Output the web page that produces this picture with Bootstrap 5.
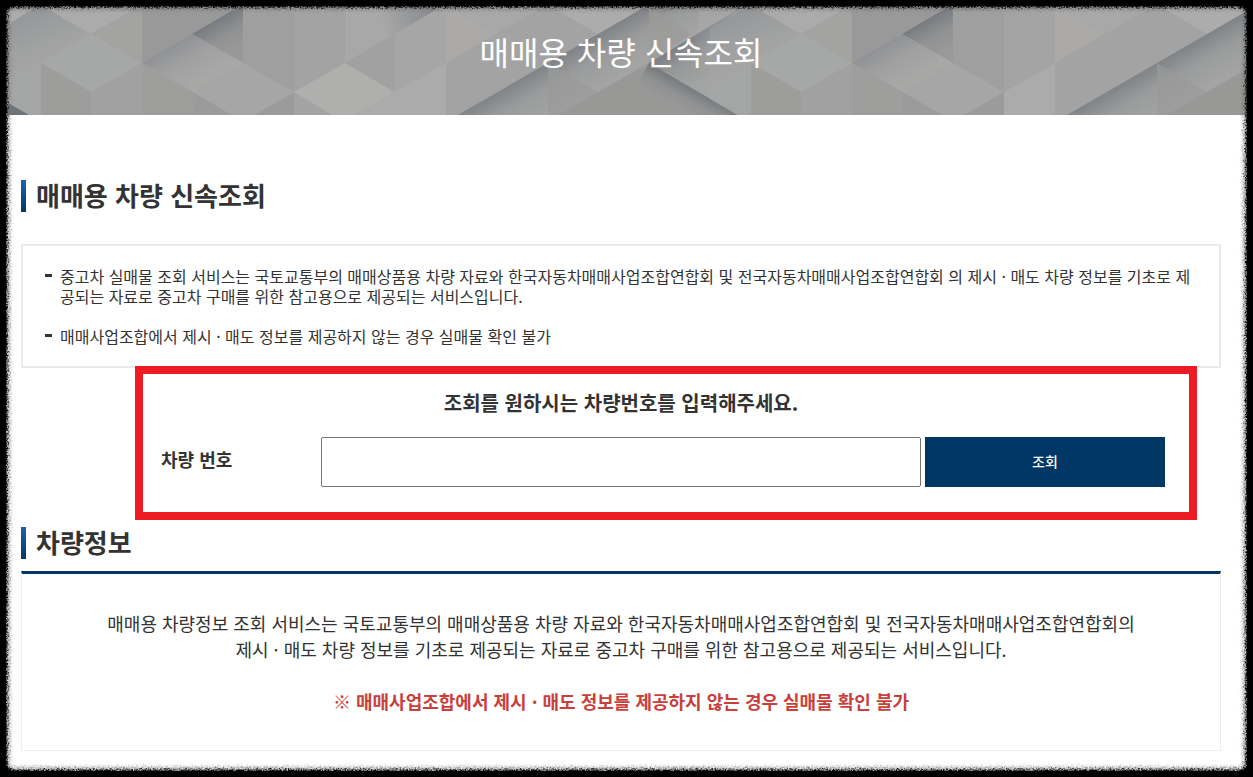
<!DOCTYPE html>
<html lang="ko">
<head>
<meta charset="utf-8">
<meta name="viewport" content="width=device-width, initial-scale=1">
<title>매매용 차량 신속조회</title>
<link href="https://cdn.jsdelivr.net/npm/bootstrap@5.3.0/dist/css/bootstrap.min.css" rel="stylesheet">
<style>
  :root { --navy: #003764; --ink: #333; }
  body { font-family: "Noto Sans CJK KR", sans-serif; color: var(--ink); background: #fff; }
  .page { min-height: 100vh; }
  .gutters { padding-left: 21px; padding-right: 32px; }
  .banner { height: 115px; background: #a3a3a3; }
  .banner h1 { font-size: 32px; line-height: 48px; padding-top: 27px; }
  .section-title { border-left: 5px solid; border-image: linear-gradient(#1a67ac, var(--navy)) 1; padding-left: 10px; font-size: 26px; line-height: 30px; padding-bottom: 2px; font-weight: 700; }
  .intro { padding-top: 65px; }
  .notice { border: 2px solid #eaeaea; padding: 20px 20px 20px 37px; margin-top: 32px; font-size: 16px; line-height: 20px; }
  .notice li + li { margin-top: 20px; }
  .notice li::before { content: ""; position: absolute; left: -15px; top: 8px; width: 7px; height: 3px; background: var(--ink); }
  .lookup { padding: 19px 56px 33px 140px; }
  .lookup h3 { font-size: 20px; line-height: 32px; margin: 0 -56px 18px -140px; }
  .lookup label { width: 160px; font-size: 18px; padding-bottom: 5px; }
  .lookup .form-control { height: 50px; border: 1px solid #767676; border-radius: 2px; }
  .lookup .btn { width: 240px; height: 50px; padding-bottom: 8px; background: var(--navy); color: #fff; font-size: 14px; }
  .marker { inset: -2px 24px 0 114px; border: 8px solid #ed1c24; }
  .details { padding-top: 7px; }
  .result { border: 1px solid #eee; border-top: 3px solid var(--navy); margin-top: 12px; padding: 36px 16px; font-size: 18px; line-height: 26px; }
  .caution { color: #c8403c; margin-top: 26px; }
</style>
</head>
<body>
<div class="page position-relative overflow-hidden">
  <header class="banner gutters position-relative overflow-hidden text-center text-white">
    <svg class="position-absolute top-0 start-0 w-100 h-100" viewBox="0 0 1253 115" preserveAspectRatio="xMidYMin slice" aria-hidden="true">
      <defs>
        <linearGradient id="fallA" gradientUnits="userSpaceOnUse" x1="207" y1="25" x2="226" y2="58"><stop offset="0" stop-color="#777b80"/><stop offset=".5" stop-color="#919293"/><stop offset="1" stop-color="#999"/></linearGradient>
        <linearGradient id="fallB" gradientUnits="userSpaceOnUse" x1="167" y1="47" x2="190" y2="87"><stop offset="0" stop-color="#8e9094"/><stop offset=".45" stop-color="#a0a0a1"/><stop offset="1" stop-color="#a8a8a7"/></linearGradient>
        <linearGradient id="fallC" gradientUnits="userSpaceOnUse" x1="345" y1="40" x2="430" y2="10"><stop offset=".45" stop-color="#a8a8a8"/><stop offset="1" stop-color="#8a8c90"/></linearGradient>
        <linearGradient id="fallD" gradientUnits="userSpaceOnUse" x1="560" y1="56" x2="583" y2="96"><stop offset="0" stop-color="#808387"/><stop offset=".45" stop-color="#9a9b9c"/><stop offset="1" stop-color="#a3a4a3"/></linearGradient>
        <linearGradient id="fallE" gradientUnits="userSpaceOnUse" x1="670" y1="51" x2="692" y2="89"><stop offset="0" stop-color="#7c8085"/><stop offset=".4" stop-color="#959798"/><stop offset="1" stop-color="#a3a5a4"/></linearGradient>
        <linearGradient id="liftE" gradientUnits="userSpaceOnUse" x1="680" y1="0" x2="745" y2="0"><stop offset="0" stop-color="#a5a5a5" stop-opacity="0"/><stop offset="1" stop-color="#a5a5a5" stop-opacity=".85"/></linearGradient>
        <linearGradient id="fallF" gradientUnits="userSpaceOnUse" x1="700" y1="92" x2="688" y2="114"><stop offset="0" stop-color="#77797e"/><stop offset=".5" stop-color="#909192"/><stop offset="1" stop-color="#989897"/></linearGradient>
        <linearGradient id="fallG" gradientUnits="userSpaceOnUse" x1="15" y1="15" x2="38" y2="70"><stop offset="0" stop-color="#949699"/><stop offset=".6" stop-color="#a0a1a1"/><stop offset="1" stop-color="#a4a5a4"/></linearGradient>
        <clipPath id="middle"><path d="M710 0H1004V115H710z"/></clipPath>
        <clipPath id="rightEnd"><path d="M1004 0H1253V115H1004z"/></clipPath>
        <g id="facets">
          <path fill="#a4a6a5" d="M0 50H41V115H28L0 99z"/>
          <path fill="url(#fallG)" d="M32 0L91 34L41 63L0 85V28L12 22L50 0z"/>
          <path fill="#ababab" d="M32 0L91 34L150 0z"/>
          <path fill="#a3a3a1" d="M91 34L142 5V63z"/>
          <path fill="#a6a8a7" d="M41 63L91 34L142 63L91 92z"/>
          <path fill="#9d9d9c" d="M41 63L91 92V115H41z"/>
          <path fill="#a0a1a0" d="M91 92L142 63V115H91z"/>
          <path fill="#999" d="M142 0H250L142 63z"/>
          <path fill="url(#fallA)" d="M192 34L250 0H243V63z"/>
          <path fill="#9f9fa0" d="M243 4L250 0H294V92L243 63z"/>
          <path fill="#a3a3a3" d="M294 0H345V63L294 92z"/>
          <path fill="url(#fallB)" d="M142 63L192 34L243 63L193 92z"/>
          <path fill="#9e9f9d" d="M142 63L193 92V115H142z"/>
          <path fill="#9b9b9b" d="M193 92L232 115H193zM294 92V115H254z"/>
          <path fill="#a6a6a6" d="M193 92L243 63L294 92L254 115H232z"/>
          <path fill="#afafad" d="M294 92L345 63L395 92L355 115H332z"/>
          <path fill="url(#fallC)" d="M345 0H453L345 63z"/>
          <path fill="#a1a1a1" d="M345 63L395 34V92z"/>
          <path fill="#a6a6a6" d="M395 34L446 4V63L395 92z"/>
          <path fill="#ababab" d="M395 92L446 63V115H355z"/>
          <path fill="#acaaa8" d="M446 5L497 34L446 63z"/>
          <path fill="#a8a8a8" d="M446 5V0H556L497 34z"/>
          <path fill="#a3a3a3" d="M446 63L554 0L598 34L458 115H446z"/>
          <path fill="#acacac" d="M540 0L598 34L657 0z"/>
          <path fill="url(#fallD)" d="M458 115L657 0H754L598 92L558 115z"/>
          <path fill="#999a98" fill-opacity=".7" d="M548 63L598 92L558 115H548z"/>
          <path fill="#9b9b99" fill-opacity=".7" d="M649 5L690 34L649 63z"/>
          <path fill="#989897" d="M598 92L649 63L738 115H558z"/>
          <path fill="url(#fallF)" d="M649 63L738 115H620z"/>
          <path fill="#a6a6a6" fill-opacity=".7" d="M699 0H754L699 34z"/>
          <path fill="url(#fallE)" d="M649 63L754 0L801 34L751 63V115H738z"/>
          <path fill="url(#liftE)" d="M680 45L754 0L801 34L751 63L699 70z"/>
        </g>
      </defs>
      <use href="#facets"/>
      <g clip-path="url(#middle)"><use href="#facets" x="710"/></g>
      <g clip-path="url(#rightEnd)"><use href="#facets" x="609"/></g>
      <path fill="#a4a4a4" d="M1004 0H1055V63L1004 92z"/>
      <path fill="#adadad" d="M0 8H32L12 22L0 28z"/>
      <path fill="#6f737a" d="M8 103L29 115H8z"/>
    </svg>
    <h1 class="position-relative fw-normal mb-0">매매용 차량 신속조회</h1>
  </header>

  <main class="gutters">
    <section class="intro">
      <h2 class="section-title mb-0">매매용 차량 신속조회</h2>
      <ul class="notice list-unstyled mb-0">
        <li class="position-relative">중고차 실매물 조회 서비스는 국토교통부의 매매상품용 차량 자료와 한국자동차매매사업조합연합회 및 전국자동차매매사업조합연합회 의 제시 · 매도 차량 정보를 기초로 제공되는 자료로 중고차 구매를 위한 참고용으로 제공되는 서비스입니다.</li>
        <li class="position-relative">매매사업조합에서 제시 · 매도 정보를 제공하지 않는 경우 실매물 확인 불가</li>
      </ul>
    </section>

    <section class="lookup position-relative">
      <div class="marker position-absolute pe-none"></div>
      <h3 class="fw-bold text-center">조회를 원하시는 차량번호를 입력해주세요.</h3>
      <form class="d-flex align-items-center">
        <label for="plate" class="fw-bold flex-shrink-0">차량 번호</label>
        <input id="plate" type="text" class="form-control me-1">
        <button type="button" class="btn rounded-0 border-0 flex-shrink-0 fw-medium">조회</button>
      </form>
    </section>

    <section class="details pb-3">
      <h2 class="section-title mb-0">차량정보</h2>
      <div class="result text-center">
        <p class="mb-0">매매용 차량정보 조회 서비스는 국토교통부의 매매상품용 차량 자료와 한국자동차매매사업조합연합회 및 전국자동차매매사업조합연합회의<br>제시 · 매도 차량 정보를 기초로 제공되는 자료로 중고차 구매를 위한 참고용으로 제공되는 서비스입니다.</p>
        <p class="caution fw-bold mb-0">※ 매매사업조합에서 제시 · 매도 정보를 제공하지 않는 경우 실매물 확인 불가</p>
      </div>
    </section>
  </main>

  <svg class="position-absolute top-0 start-0 w-100 h-100 pe-none" aria-hidden="true">
    <defs>
      <filter id="torn" filterUnits="userSpaceOnUse" x="0" y="0" width="100%" height="100%">
        <feGaussianBlur in="SourceGraphic" stdDeviation="1" result="soft"/>
        <feTurbulence type="fractalNoise" baseFrequency=".6" numOctaves="2" seed="4" result="grain"/>
        <feDisplacementMap in="soft" in2="grain" scale="7" xChannelSelector="R" yChannelSelector="G"/>
      </filter>
    </defs>
    <g fill="none" filter="url(#torn)">
      <rect width="100%" height="100%" rx="14" stroke="#777" stroke-opacity=".35" stroke-width="22"/>
      <rect width="100%" height="100%" rx="14" stroke="#000" stroke-width="15"/>
    </g>
    <rect width="100%" height="100%" fill="none" stroke="#000" stroke-width="12"/>
  </svg>
</div>
<script src="https://cdn.jsdelivr.net/npm/bootstrap@5.3.0/dist/js/bootstrap.bundle.min.js"></script>
</body>
</html>
